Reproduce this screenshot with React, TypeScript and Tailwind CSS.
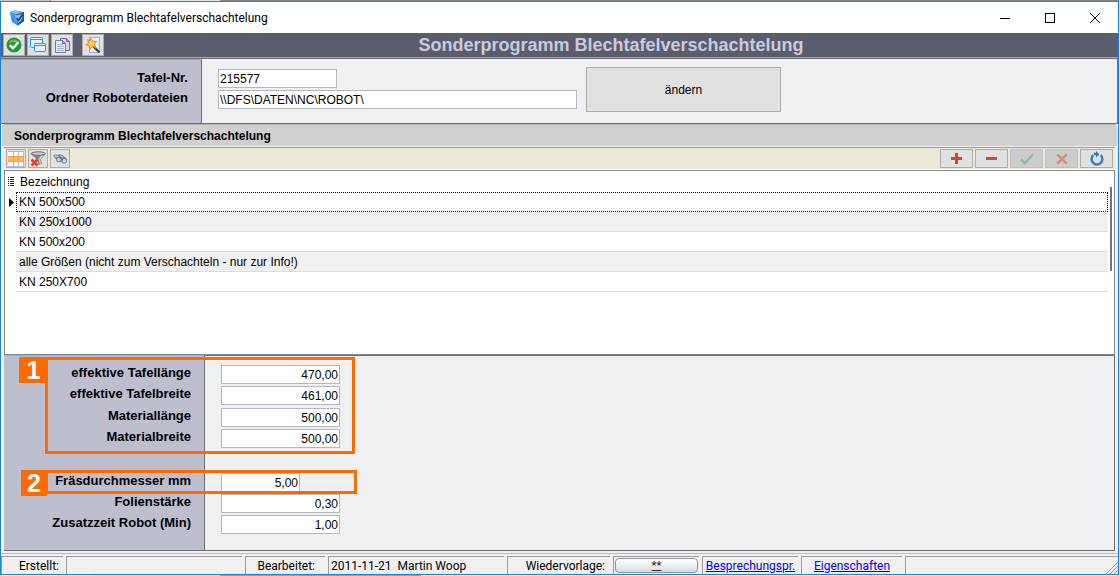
import React from "react";

const ROWS = [
  "KN 500x500",
  "KN 250x1000",
  "KN 500x200",
  "alle Größen (nicht zum Verschachteln - nur zur Info!)",
  "KN 250X700",
];

const UI = "font-['Roboto','Noto_Sans',sans-serif]";

function ShieldIcon() {
  return (
    <svg width="16" height="16" viewBox="0 0 16 16" aria-hidden="true">
      <path d="M1 2 L6 0.5 L15 2 V11 L9 15.5 L3 12 Z" fill="#2a7fd4" />
      <path d="M1 2 L6 0.5 L15 2 L7 4.5 Z" fill="#7fc4f5" />
      <path d="M1 2 L7 4.5 L9 15.5 L3 12 Z" fill="#3c9be8" />
      <path d="M7 4.5 L15 2 V11 L9 15.5 Z" fill="#1559a8" />
      <path d="M6 5.5 L13.5 4 Q14 10 9.5 13 Q6.5 10 6 5.5 Z" fill="#8fbfe6" />
      <path d="M7.5 8 L9.5 10.5 L13.5 4.5" fill="none" stroke="#123f86" strokeWidth="1.6" />
    </svg>
  );
}

function OkIcon() {
  return (
    <svg width="16" height="16" viewBox="0 0 16 16" aria-hidden="true">
      <circle cx="8" cy="8" r="7" fill="#1f9a2a" stroke="#2c8a34" />
      <path d="M2.5 6 A6 6 0 0 1 13.5 6 Q8 4.5 2.5 6 Z" fill="#5cc65c" />
      <path d="M3.8 8.2 L7 11.3 L12.4 5.2" fill="none" stroke="#fff" strokeWidth="2.4" />
    </svg>
  );
}

function WindowsIcon() {
  return (
    <svg width="18" height="18" viewBox="0 0 18 18" className="shrink-0" fill="#e9f1f8" stroke="#1e96f0" aria-hidden="true">
      <rect x="1.5" y="1.5" width="12" height="10" rx="1" />
      <path d="M2 3.5 H13" />
      <rect x="5.5" y="7.5" width="11" height="8" rx="1" />
      <path d="M6 9.5 H16" />
    </svg>
  );
}

function PagesIcon() {
  return (
    <svg width="18" height="18" viewBox="0 0 18 18" className="shrink-0" aria-hidden="true">
      <path d="M7.5 2.5 H13.5 L16.5 5.5 V14.5 H7.5 Z" fill="#ddd2ea" stroke="#7c5aa6" />
      <path d="M13.5 2.5 V5.5 H16.5" fill="#b79ed2" stroke="#7c5aa6" />
      <path d="M2.5 4.5 H9.5 L12.5 7.5 V16.5 H2.5 Z" fill="#e6ebf3" stroke="#6f7fa3" />
      <path d="M9.5 4.5 V7.5 H12.5" fill="#9babc9" stroke="#5d6f97" />
      <path d="M4 8.5 H10 M4 10.5 H11 M4 12.5 H11 M4 14.5 H11" stroke="#a3b1cb" />
    </svg>
  );
}

function WizardIcon() {
  return (
    <svg width="18" height="18" viewBox="0 0 18 18" className="shrink-0" aria-hidden="true">
      <rect x="5.5" y="1.5" width="10" height="15" fill="#e3edf9" stroke="#9db3d0" />
      <path d="M8.5 9.5 L15.5 16.5" stroke="#444" strokeWidth="2.4" />
      <path d="M7 2.5 L8.5 5.3 L12.5 5.3 L10.5 8 L12 11.5 L8.5 10.5 L6 13.3 L5.4 10 L1.8 8.8 L4.6 7 L3.8 3.6 L6 4.8 Z" fill="#ffc861" stroke="#e58a20" />
    </svg>
  );
}

function GridIcon() {
  return (
    <svg width="16" height="16" viewBox="0 0 16 16" aria-hidden="true">
      <rect x="0" y="0" width="16" height="16" fill="#b9b9d0" />
      <g fill="#fff">
        <rect x="0" y="1" width="5" height="4" /><rect x="6" y="1" width="4" height="4" /><rect x="11" y="1" width="4" height="4" />
        <rect x="0" y="11" width="5" height="4" /><rect x="6" y="11" width="4" height="4" /><rect x="11" y="11" width="4" height="4" />
      </g>
      <rect x="0" y="5" width="16" height="6" fill="#f0a03c" />
      <g fill="#ffba55">
        <rect x="0" y="6" width="5" height="4" /><rect x="6" y="6" width="4" height="4" /><rect x="11" y="6" width="4" height="4" />
      </g>
    </svg>
  );
}

function FilterIcon() {
  return (
    <svg width="16" height="16" viewBox="0 0 16 16" aria-hidden="true">
      <path d="M1 3 L7 8.5 L8.5 14 L12 13 L11 8.5 L15.5 3 Z" fill="#858585" />
      <path d="M8.5 8 L11.5 4 L14 4 L10.3 8.5 L11 13 L10 13 Z" fill="#d4d4d4" />
      <ellipse cx="8.2" cy="2.6" rx="7" ry="1.8" fill="#c9c9c9" stroke="#6a6a6a" />
      <path d="M1.5 8.5 L7.5 14.5 M7.5 8.5 L1.5 14.5" stroke="#e2421e" strokeWidth="2.6" />
    </svg>
  );
}

function BinocularsIcon() {
  return (
    <svg width="16" height="16" viewBox="0 0 16 16" aria-hidden="true">
      <path d="M1 5 Q2 2.5 5 3.5 L9 6 L9 10 L5 9.5 Z" fill="#8d9297" />
      <path d="M6 4 Q8 2.5 10.5 4 L15 8 L13 12 L9 10 Z" fill="#7b8187" />
      <path d="M2.5 5 L6 5.5 M8 4.5 L11 6" stroke="#d6dadd" />
      <ellipse cx="6.8" cy="8.8" rx="2.2" ry="2.2" fill="#c4dcf2" stroke="#6a747e" />
      <ellipse cx="12.3" cy="9.8" rx="2.4" ry="2.4" fill="#c4dcf2" stroke="#6a747e" />
    </svg>
  );
}

function ToolButton({ label, children }: { label: string; children: React.ReactNode }) {
  return (
    <button type="button" aria-label={label} className="flex size-[22px] items-center justify-center border border-[#adadad] bg-[#e1e1e1]">
      {children}
    </button>
  );
}

function SmallButton({ label, children }: { label: string; children: React.ReactNode }) {
  return (
    <button type="button" aria-label={label} className="flex h-[19px] w-5 items-center justify-center border border-[#adadad] bg-[#e1e1e1]">
      {children}
    </button>
  );
}

function NavButton({ label, disabled, children }: { label: string; disabled?: boolean; children: React.ReactNode }) {
  return (
    <button
      type="button"
      aria-label={label}
      disabled={disabled}
      className="flex h-[19px] w-[33px] items-center justify-center border border-[#adadad] bg-[#e1e1e1] disabled:border-[#bfbfbf] disabled:bg-[#cccccc]"
    >
      {children}
    </button>
  );
}

const FIELD = "h-[19px] border border-[#b4b8be] bg-white text-[12px] text-black outline-none";

function FormLabel({ id, children }: { id: string; children: React.ReactNode }) {
  return (
    <label htmlFor={id} className="block h-[21px] text-right text-[13px] leading-4 font-bold">
      {children}
    </label>
  );
}

function NumberField({ id, value, short }: { id: string; value: string; short?: boolean }) {
  return (
    <div className="h-[21px]">
      <input id={id} defaultValue={value} className={`${FIELD} block px-px text-right ${short ? "w-[79px]" : "w-[119px]"}`} />
    </div>
  );
}

const CELL = "flex h-[18px] items-center overflow-hidden border-t border-l border-[#9c9c9c] whitespace-pre";

export default function App() {
  return (
    <div className="flex min-h-screen flex-col bg-white font-['Liberation_Sans',Arial,sans-serif] text-black">
      <div className="flex h-px shrink-0">
        <div className="w-[50px] bg-[#c2c6d0]" />
        <div className="w-px bg-[#777777]" />
        <div className="w-[169px] bg-[#dfe3e8]" />
        <div className="flex-1 bg-[#808890]" />
      </div>

      <div className="flex flex-1 flex-col border border-[#1883d7] bg-[#f0f0f0]">
        <header className={`flex h-[31px] shrink-0 items-center bg-white pl-2 ${UI}`}>
          <ShieldIcon />
          <h1 className="ml-[5px] flex-1 text-[12px] leading-4">Sonderprogramm Blechtafelverschachtelung</h1>
          <div className="flex pr-px">
            <button type="button" aria-label="Minimieren" className="flex h-[29px] w-[45px] items-center justify-center">
              <svg width="10" height="10" viewBox="0 0 10 10"><path d="M0 5.5 H10" stroke="#000" /></svg>
            </button>
            <button type="button" aria-label="Maximieren" className="flex h-[29px] w-[45px] items-center justify-center">
              <svg width="10" height="10" viewBox="0 0 10 10"><rect x="0.5" y="0.5" width="9" height="9" fill="none" stroke="#000" /></svg>
            </button>
            <button type="button" aria-label="Schließen" className="flex h-[29px] w-[45px] items-center justify-center">
              <svg width="10" height="10" viewBox="0 0 10 10"><path d="M0 0 L10 10 M10 0 L0 10" stroke="#000" /></svg>
            </button>
          </div>
        </header>

        <div className="flex h-[25px] shrink-0 items-center border-b border-[#a5a7b3] bg-[#5a5d6e] pl-[2px]">
          <div className="flex gap-[2px]">
            <ToolButton label="OK"><OkIcon /></ToolButton>
            <ToolButton label="Fenster"><WindowsIcon /></ToolButton>
            <ToolButton label="Kopieren"><PagesIcon /></ToolButton>
          </div>
          <div className="ml-[9px]">
            <ToolButton label="Assistent"><WizardIcon /></ToolButton>
          </div>
          <h2 className="flex-1 text-center text-[18px] leading-6 font-bold text-[#c9cbdd]">Sonderprogramm Blechtafelverschachtelung</h2>
        </div>

        <section className="flex shrink-0 border-t border-r border-b border-[#6f6f73]">
          <div className="flex w-[201px] flex-col gap-1 border-t border-r border-t-[#a5a7b3] border-r-[#6f6f73] bg-[#bdbfcf] pt-[10px] pr-[13px] text-right text-[13px] leading-4 font-bold">
            <label htmlFor="tafel">Tafel-Nr.</label>
            <label htmlFor="ordner">Ordner Roboterdateien</label>
          </div>
          <div className="flex flex-1 gap-[9px] bg-[#eff0f2] pt-2 pb-[11px] pl-4">
            <div className="flex flex-col gap-[2px] pt-[2px]">
              <input id="tafel" defaultValue="215577" className={`${FIELD} w-[119px] px-px`} />
              <input id="ordner" defaultValue={"\\\\DFS\\DATEN\\NC\\ROBOT\\"} className={`${FIELD} w-[359px] px-px`} />
            </div>
            <button type="button" className="h-[45px] w-[195px] border border-[#adadad] bg-[#e1e1e1] text-[12px]">ändern</button>
          </div>
        </section>

        <div className="mx-px flex h-[22px] shrink-0 items-center rounded-t border-t border-[#b4b4b4] bg-[#d0d0d0] pl-3">
          <h3 className="text-[12px] leading-4 font-bold">Sonderprogramm Blechtafelverschachtelung</h3>
        </div>

        <div className="flex flex-1 flex-col border-b border-[#b8b8b8] px-[3px] pb-[2px]">
          <div className="mt-px flex h-[23px] shrink-0 items-center justify-between border-t border-b border-t-[#9a9a9a] border-b-white bg-[#ece9d8] px-[2px]">
            <div className="flex gap-[2px]">
              <SmallButton label="Raster"><GridIcon /></SmallButton>
              <SmallButton label="Filter löschen"><FilterIcon /></SmallButton>
              <SmallButton label="Suchen"><BinocularsIcon /></SmallButton>
            </div>
            <div className="flex gap-[2px]">
              <NavButton label="Hinzufügen">
                <svg width="11" height="11" viewBox="0 0 11 11"><path d="M5.5 0 V11 M0 5.5 H11" stroke="#cb4a2c" strokeWidth="3" /></svg>
              </NavButton>
              <NavButton label="Entfernen">
                <svg width="11" height="11" viewBox="0 0 11 11"><path d="M0 5.5 H11" stroke="#cb4a2c" strokeWidth="3" /></svg>
              </NavButton>
              <NavButton label="Übernehmen" disabled>
                <svg width="14" height="12" viewBox="0 0 14 12"><path d="M1 6.5 L5 10.2 L13 1.2" fill="none" stroke="#8cbba4" strokeWidth="2.4" /></svg>
              </NavButton>
              <NavButton label="Verwerfen" disabled>
                <svg width="12" height="12" viewBox="0 0 12 12"><path d="M1.3 1.3 L10.7 10.7 M10.7 1.3 L1.3 10.7" stroke="#d68b7d" strokeWidth="2.6" /></svg>
              </NavButton>
              <NavButton label="Aktualisieren">
                <svg width="14" height="15" viewBox="0 0 14 15">
                  <path d="M3.2 4.2 A5.4 5.4 0 1 0 10.8 4.2" fill="none" stroke="#3b78b8" strokeWidth="2.4" />
                  <path d="M4 1.2 L6 2 V0 L9.6 3.4 L6 6.4 V4 L4 4.6 Z" fill="#3b78b8" />
                </svg>
              </NavButton>
            </div>
          </div>

          <div className="flex min-h-[184px] flex-1 border border-[#828790] bg-white">
            <table className="h-fit flex-1 border-collapse text-[12px] leading-4">
              <thead>
                <tr className="h-[21px]">
                  <th className="w-[11px] p-0">
                    <svg className="ml-[3px] block" width="7" height="9" viewBox="0 0 7 9" stroke="#222">
                      <path d="M0 0.5 H1 M2 0.5 H6 M0 2.5 H1 M2 2.5 H6 M0 4.5 H1 M2 4.5 H6 M0 6.5 H1 M2 6.5 H6 M0 8.5 H1 M2 8.5 H6" />
                    </svg>
                  </th>
                  <th className="p-0 pt-px pl-1 text-left font-normal">Bezeichnung</th>
                </tr>
              </thead>
              <tbody>
                {ROWS.map((name, i) => (
                  <tr key={name} className="h-5">
                    <td className="p-0">
                      {i === 0 && (
                        <svg className="ml-1 block" width="6" height="9" viewBox="0 0 6 9"><path d="M0 0 L5 4.5 L0 9 Z" fill="#000" /></svg>
                      )}
                    </td>
                    <td className="p-0">
                      <div
                        className={
                          i === 0
                            ? "h-5 border border-dotted border-black pl-[2px] leading-[19px]"
                            : i % 2
                              ? "h-5 border-b border-[#dcdcdc] bg-[#f0f0f0] pl-[3px] leading-5"
                              : "h-5 border-b border-[#dcdcdc] pl-[3px] leading-5"
                        }
                      >
                        {name}
                      </div>
                    </td>
                  </tr>
                ))}
              </tbody>
            </table>
            <div className="mt-4 mr-[2px] ml-[2px] h-[84px] w-[2px] bg-[#757575]" />
          </div>

          <form className="relative flex shrink-0 border-b border-[#6f6f73]">
            <div className="flex w-[201px] flex-col border-t border-r border-t-[#a5a7b3] border-r-[#6f6f73] bg-[#bdbfcf] pt-[9px] pr-[13px]">
              <FormLabel id="laenge">effektive Tafellänge</FormLabel>
              <FormLabel id="breite">effektive Tafelbreite</FormLabel>
              <div className="mt-px" />
              <FormLabel id="mlaenge">Materiallänge</FormLabel>
              <FormLabel id="mbreite">Materialbreite</FormLabel>
              <div className="mt-[23px]" />
              <FormLabel id="fraes">Fräsdurchmesser mm</FormLabel>
              <FormLabel id="folie">Folienstärke</FormLabel>
              <FormLabel id="zusatz">Zusatzzeit Robot (Min)</FormLabel>
            </div>
            <div className="flex flex-1 flex-col border-t border-r border-[#6f6f73] bg-[#eff0f2] pt-[9px] pb-[14px] pl-4">
              <NumberField id="laenge" value="470,00" />
              <NumberField id="breite" value="461,00" />
              <div className="mt-px" />
              <NumberField id="mlaenge" value="500,00" />
              <NumberField id="mbreite" value="500,00" />
              <div className="mt-[23px]" />
              <NumberField id="fraes" value="5,00" short />
              <NumberField id="folie" value="0,30" />
              <NumberField id="zusatz" value="1,00" />
            </div>
            <div className="pointer-events-none absolute top-[2px] left-[41px] h-[97px] w-[310px] border-[3px] border-[#ff6a00]" />
            <div className="pointer-events-none absolute top-[2px] left-[15px] flex h-[26px] w-[29px] items-center justify-center bg-[#ff6a00] text-[25px] leading-6 font-bold text-white">1</div>
            <div className="pointer-events-none absolute top-[115px] left-[41px] h-6 w-[312px] border-[3px] border-[#ff6a00]" />
            <div className="pointer-events-none absolute top-[115px] left-[17px] flex h-[26px] w-[26px] items-center justify-center bg-[#ff6a00] text-[25px] leading-6 font-bold text-white">2</div>
          </form>
        </div>

        <footer className={`flex shrink-0 gap-[3px] pt-[2px] text-[12px] leading-4 ${UI}`}>
          <div className={`${CELL} w-[62px] justify-end pr-1`}>Erstellt:</div>
          <div className={`${CELL} w-[176px]`} />
          <div className={`${CELL} w-[80px] justify-end pr-[10px]`}>Bearbeitet:</div>
          <div className={`${CELL} w-[176px] pl-[2px]`}>{"2011-11-21  Martin Woop"}</div>
          <div className={`${CELL} w-[103px] justify-end pr-[5px]`}>Wiedervorlage:</div>
          <div className={`${CELL} w-[86px] px-px`}>
            <button type="button" className="h-[15px] w-full rounded-sm border border-[#8a93a0] bg-linear-to-b from-white to-[#d6dbe4] text-[11px] leading-[13px] font-medium text-[#3a2a10] underline">**</button>
          </div>
          <div className={`${CELL} w-[96px] justify-center`}>
            <a href="#besprechung" className="text-[#0000ff] underline">Besprechungspr.</a>
          </div>
          <div className={`${CELL} w-[101px] justify-center`}>
            <a href="#eigenschaften" className="text-[#0000ff] underline">Eigenschaften</a>
          </div>
          <div className={`${CELL} flex-1 items-end justify-end`}>
            <svg width="12" height="12" viewBox="0 0 12 12" stroke="#9a9a9a"><path d="M0 12 L12 0 M4 12 L12 4 M8 12 L12 8" /></svg>
          </div>
        </footer>
      </div>

      <div className="flex h-px shrink-0">
        <div className="w-[91px] bg-white" />
        <div className="w-[129px] bg-[#e4e6ea]" />
        <div className="w-[201px] bg-[#9aa3ad]" />
        <div className="flex-1 bg-white" />
      </div>
    </div>
  );
}
